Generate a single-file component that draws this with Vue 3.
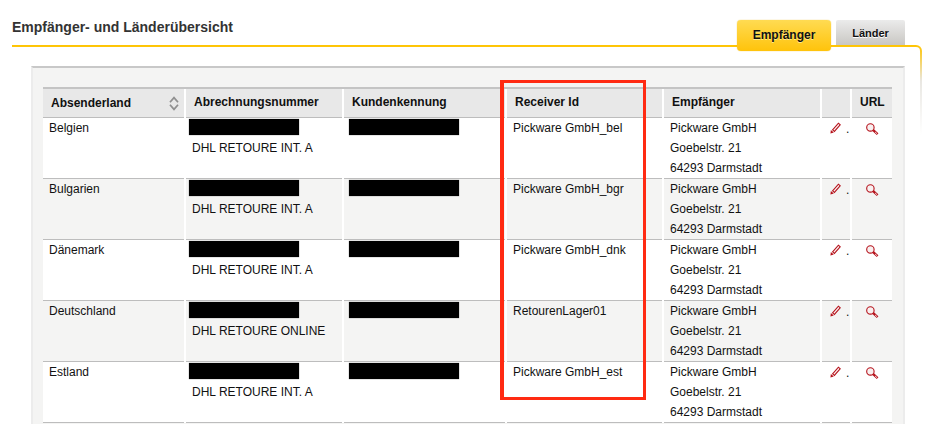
<script setup>
const columns = ["Abrechnungsnummer", "Kundenkennung", "Receiver Id", "Empfänger", "", "URL"];

const rows = [
  { country: "Belgien", product: "DHL RETOURE INT. A", receiver: "Pickware GmbH_bel" },
  { country: "Bulgarien", product: "DHL RETOURE INT. A", receiver: "Pickware GmbH_bgr" },
  { country: "Dänemark", product: "DHL RETOURE INT. A", receiver: "Pickware GmbH_dnk" },
  { country: "Deutschland", product: "DHL RETOURE ONLINE", receiver: "RetourenLager01" },
  { country: "Estland", product: "DHL RETOURE INT. A", receiver: "Pickware GmbH_est" },
];
</script>

<template>
  <div class="page">
    <div class="head">
      <h1 class="title">Empfänger- und Länderübersicht</h1>
      <div class="tabs">
        <div class="tab tab-active">Empfänger</div>
        <div class="tab">Länder</div>
      </div>
    </div>

    <div class="frame">
      <div class="frame-inner">
        <div class="card">
          <div class="table">
            <div class="row row-head">
              <div class="th th-sort">
                Absenderland
                <svg class="sort" width="10" height="15" viewBox="0 0 10 15" fill="none">
                  <path d="M1 6.2 5 1.6l4 4.6" stroke="#8f8f8f" stroke-width="1.7" />
                  <path d="M1 8.8 5 13.4l4-4.6" stroke="#8f8f8f" stroke-width="1.7" />
                </svg>
              </div>
              <div v-for="(col, i) in columns" :key="i" class="th">{{ col }}</div>
            </div>

            <div v-for="(row, i) in rows" :key="row.country" class="row" :class="{ 'row-alt': i % 2 === 1 }">
              <div class="td">{{ row.country }}</div>
              <div class="td td-code">
                <div class="redact"></div>
                {{ row.product }}
              </div>
              <div class="td td-customer"><div class="redact"></div></div>
              <div class="td">{{ row.receiver }}</div>
              <div class="td">
                Pickware GmbH<br />
                Goebelstr. 21<br />
                64293 Darmstadt
              </div>
              <div class="td td-edit">
                <svg width="11" height="12" viewBox="0 0 11 12" fill="none">
                  <path d="M2.6 7.8 8.4 1.2l1.8 1.6-5.8 6.6Z" stroke="#b5121b" stroke-width="1.1" fill="#fbeeee" />
                  <path d="M.4 11.4.9 8l2.9 2.5Z" fill="#b5121b" />
                </svg>
                <span class="dot">.</span>
              </div>
              <div class="td td-url">
                <svg width="13" height="13" viewBox="0 0 13 13" fill="none">
                  <circle cx="4.4" cy="4.4" r="3.7" stroke="#b5121b" stroke-width="1.1" fill="#f8f0f0" />
                  <path d="M7.2 7.2l4.4 4" stroke="#b5121b" stroke-width="2.4" />
                  <path d="M9 8.9l2 1.8" stroke="#f8e4e4" stroke-width="0.9" />
                </svg>
              </div>
            </div>
          </div>
          <div class="highlight"></div>
        </div>
      </div>
    </div>
  </div>
</template>

<style>
html,
body {
  background: #fff;
}
</style>

<style scoped>
.page {
  height: 424px;
  overflow: hidden;
  padding-left: 12px;
  padding-right: 20px;
  font-family: "Liberation Sans", Arial, sans-serif;
  font-size: 12px;
  color: #111;
}

.head {
  display: flex;
  justify-content: space-between;
  align-items: flex-start;
  height: 45px;
  position: relative;
  z-index: 1;
}

.title {
  margin: 19px 0 0;
  font-size: 14px;
  line-height: 17px;
  font-weight: bold;
  color: #333;
}

.tabs {
  display: flex;
  align-items: flex-start;
  gap: 5px;
  margin: 20px 17px 0 0;
}

.tab {
  width: 69px;
  height: 25px;
  line-height: 26px;
  text-align: center;
  font-size: 11px;
  font-weight: bold;
  color: #111;
  text-shadow: 0 1px 0 #fff;
  border-radius: 2px 2px 0 0;
  background: linear-gradient(#ebebeb, #c9c7c3);
}

.tab-active {
  width: 94px;
  height: 31px;
  line-height: 31px;
  font-size: 12px;
  border-radius: 4px;
  background: linear-gradient(#ffdb52, #ffc30b);
  box-shadow: 0 0 1px #e5b000;
  text-shadow: 0 1px 0 #ffe88a;
}

.frame {
  height: 379px;
  padding: 2px 2px 0 0;
  border-radius: 0 6px 0 0;
  background: linear-gradient(#ffc400, #e9e7e2 36px, #fff 90px);
}

.frame-inner {
  height: 100%;
  padding: 19px 15px 0 19px;
  border-radius: 0 4px 0 0;
  background: #fff;
}

.card {
  position: relative;
  height: 400px;
  padding: 19px 11px 0 10px;
  border-top: 2px solid #c8c8c8;
  border-left: 2px solid #ececec;
  border-right: 2px solid #ececec;
  background: #f4f4f3;
}

.table {
  border-top: 2px solid #c4c4c4;
  background: #fff;
}

.row {
  display: grid;
  grid-template-columns: 141px 156px 161px 155px 156px 28px 40px;
  column-gap: 2px;
  height: 61px;
}

.row-head {
  height: 29px;
}

.th {
  padding-left: 8px;
  line-height: 27px;
  font-weight: bold;
  color: #111;
  background: #e8e8e8;
  border-bottom: 1px solid #bdbdbd;
}

.th-sort {
  display: flex;
  align-items: center;
  justify-content: space-between;
  padding-right: 5px;
}

.td {
  padding-left: 6px;
  line-height: 20px;
  background: #fff;
  border-bottom: 1px solid #bdbdbd;
}

.row-alt .td {
  background: #f4f4f3;
}

.redact {
  width: 110px;
  height: 16px;
  margin: 1px 0 3px;
  background: #000;
  box-shadow: 0 0 1px #666;
}

.td-code .redact {
  margin-left: -3px;
}

.td-customer .redact {
  margin-left: -1px;
}

.td-edit {
  display: flex;
  align-items: flex-start;
  padding: 4px 0 0 8px;
}

.dot {
  margin-left: 5px;
  line-height: 14px;
}

.td-url {
  padding: 4px 0 0 14px;
}

.highlight {
  position: absolute;
  left: 467px;
  top: 12px;
  width: 146px;
  height: 320px;
  box-sizing: border-box;
  border: 3px solid #ff2a12;
  border-left-width: 4px;
}

*,
*::before {
  box-sizing: border-box;
}
</style>
